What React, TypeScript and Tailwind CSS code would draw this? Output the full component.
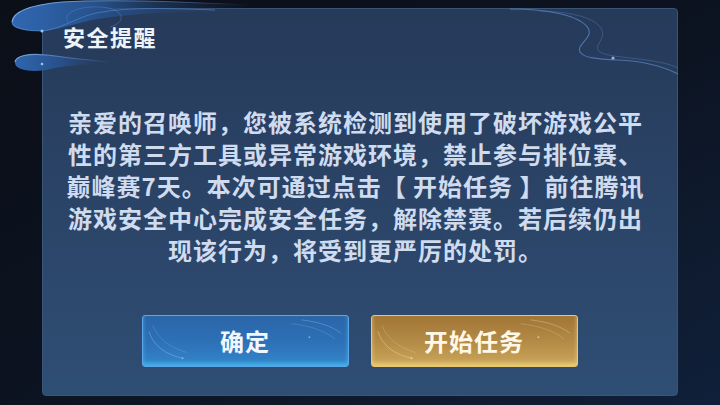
import React from 'react';

const bodyLines = [
  '亲爱的召唤师，您被系统检测到使用了破坏游戏公平',
  '性的第三方工具或异常游戏环境，禁止参与排位赛、',
  '巅峰赛7天。本次可通过点击【 开始任务 】前往腾讯',
  '游戏安全中心完成安全任务，解除禁赛。若后续仍出',
  '现该行为，将受到更严厉的处罚。',
];

// Cloud swirls that hang off the panel's top-left corner
const CornerSwirl = () => (
  <svg className="absolute left-0 top-0" width="260" height="90" viewBox="0 0 260 90" fill="none">
    <defs>
      <linearGradient id="swirlFill" x1="0" y1="0" x2="1" y2="0">
        <stop offset="0" stopColor="#3068b2" />
        <stop offset="0.35" stopColor="#27518c" />
        <stop offset="1" stopColor="#263b5c" stopOpacity="0" />
      </linearGradient>
      <linearGradient id="swirlLine" x1="0" y1="0" x2="1" y2="0">
        <stop offset="0" stopColor="#7fb0ea" />
        <stop offset="0.6" stopColor="#5d8fd0" stopOpacity="0.6" />
        <stop offset="1" stopColor="#5d8fd0" stopOpacity="0" />
      </linearGradient>
      <linearGradient id="lowFill" x1="0" y1="0" x2="1" y2="0">
        <stop offset="0" stopColor="#2f66ae" />
        <stop offset="0.5" stopColor="#284f88" />
        <stop offset="1" stopColor="#263b5c" stopOpacity="0" />
      </linearGradient>
    </defs>
    <path d="M12 22 C13 11 30 5 62 2 C110 -1 170 1 250 5 L250 12 C180 11 120 13 84 22 C64 27 50 31 42 31 C26 31 11 29 12 22 Z" fill="url(#swirlFill)" />
    <path d="M12 22 C13 11 30 5 62 2 C110 -1 170 1 250 5" stroke="url(#swirlLine)" strokeWidth="1.2" />
    <path d="M12 22 C12 28 26 31 42 31" stroke="#6e9fdc" strokeOpacity="0.5" strokeWidth="1" />
    <path d="M42 31 C60 29 72 20 92 14 C122 7 160 8 215 10" stroke="#5c8fd0" strokeOpacity="0.55" strokeWidth="1" />
    <path d="M68 22 C62 13 78 6 100 7 C124 8 128 22 110 27" stroke="#5c8fd0" strokeOpacity="0.4" strokeWidth="1" />
    <circle cx="42" cy="31" r="1.5" fill="#9cc4f2" />
    <path d="M15 62 C16 56 28 53 46 55 C64 57 84 60 110 62 L110 63 C84 64 62 66 46 70 C28 73 14 69 15 62 Z" fill="url(#lowFill)" />
    <path d="M15 62 C16 56 28 53 46 55 C64 57 84 60 110 62" stroke="url(#swirlLine)" strokeWidth="1.2" />
    <circle cx="42" cy="64" r="1.3" fill="#9cc4f2" />
  </svg>
);

// Thin flowing lines across the panel's top-right corner
const RightSwirl = () => (
  <svg className="absolute left-[500px] top-0" width="178" height="90" viewBox="0 0 178 90" fill="none">
    <path d="M10 9 C50 9 80 16 88 28 C94 38 76 44 80 52 C84 58 96 59 118 60 C144 61 162 66 178 74" stroke="#5f90d0" strokeOpacity="0.65" strokeWidth="1.2" />
    <path d="M40 11 C74 12 96 18 102 30 C106 40 92 46 100 52 C106 56 124 57 146 60 C160 62 170 64 178 68" stroke="#5f90d0" strokeOpacity="0.35" strokeWidth="1" />
    <circle cx="113" cy="58" r="1.6" fill="#8db6ea" />
  </svg>
);

const ButtonFlourish = ({ color }: { color: string }) => (
  <svg className="absolute inset-0 h-full w-full" viewBox="0 0 207 52" preserveAspectRatio="none" fill="none">
    <path d="M6 16 C10 30 22 40 40 44" stroke={color} strokeOpacity="0.35" strokeWidth="1" />
    <path d="M10 10 C16 24 26 32 44 38" stroke={color} strokeOpacity="0.2" strokeWidth="1" />
    <path d="M160 4 C176 6 190 10 200 18" stroke={color} strokeOpacity="0.3" strokeWidth="1" />
    <path d="M150 8 C166 10 182 14 194 24" stroke={color} strokeOpacity="0.2" strokeWidth="1" />
    <circle cx="40" cy="44" r="1" fill={color} fillOpacity="0.6" />
    <circle cx="168" cy="22" r="1" fill={color} fillOpacity="0.6" />
  </svg>
);

const App = () => {
  return (
    <div
      className="relative h-[405px] w-[720px] overflow-hidden bg-gradient-to-br from-[#0b0f18] via-[#0c1320] to-[#10203a]"
      style={{ fontFamily: '"Noto Sans CJK SC", "Noto Sans", sans-serif' }}
    >
      <div className="pl-[42px] pt-[8px]">
        {/* Dialog panel */}
        <div className="flex h-[388px] w-[636px] flex-col rounded-[4px] border border-[#3b5578] bg-gradient-to-b from-[#263a5a] to-[#2f4e74]">
          <div className="pl-[20px] pt-[12px] text-[22px] leading-[30px] font-semibold tracking-[1.5px] text-[#eef3fa]">
            安全提醒
          </div>

          <div className="mt-[55px] flex flex-col items-center pr-[9px] text-[24px] leading-[32px] font-semibold tracking-[1px] text-[#cfdbee]">
            {bodyLines.map(line => (
              <div key={line} className="whitespace-pre">{line}</div>
            ))}
          </div>

          <div className="mt-auto mb-[28px] flex justify-center gap-[22px] pr-[1px]">
            <button className="relative h-[52px] w-[207px] overflow-hidden rounded-[3px] border border-[#5aa6ec] bg-gradient-to-b from-[#2b65a8] via-[#2d70b6] to-[#3386cc] shadow-[inset_0_-3px_4px_rgba(80,220,250,0.55)]">
              <ButtonFlourish color="#a8d4ff" />
              <span className="relative text-[24px] font-bold tracking-[1px] text-[#f2f7ff]">确定</span>
            </button>
            <button className="relative h-[52px] w-[207px] overflow-hidden rounded-[3px] border border-[#e9c96c] bg-gradient-to-b from-[#a27636] via-[#b38a46] to-[#cca75a] shadow-[inset_0_-3px_4px_rgba(255,236,150,0.55)]">
              <ButtonFlourish color="#fff1c8" />
              <span className="relative text-[24px] font-bold tracking-[1px] text-[#fff8e6]">开始任务</span>
            </button>
          </div>
        </div>
      </div>

      <CornerSwirl />
      <RightSwirl />
    </div>
  );
};

export default App;
